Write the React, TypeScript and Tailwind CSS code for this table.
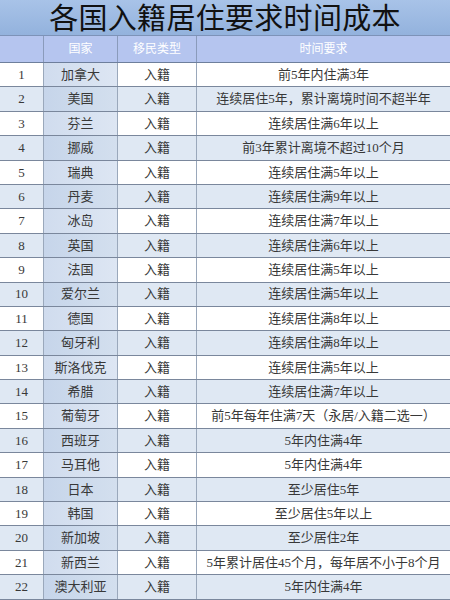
import React from 'react';

const rows: [string, string, string][] = [
  ['加拿大', '入籍', '前5年内住满3年'],
  ['美国', '入籍', '连续居住5年，累计离境时间不超半年'],
  ['芬兰', '入籍', '连续居住满6年以上'],
  ['挪威', '入籍', '前3年累计离境不超过10个月'],
  ['瑞典', '入籍', '连续居住满5年以上'],
  ['丹麦', '入籍', '连续居住满9年以上'],
  ['冰岛', '入籍', '连续居住满7年以上'],
  ['英国', '入籍', '连续居住满6年以上'],
  ['法国', '入籍', '连续居住满5年以上'],
  ['爱尔兰', '入籍', '连续居住满5年以上'],
  ['德国', '入籍', '连续居住满8年以上'],
  ['匈牙利', '入籍', '连续居住满8年以上'],
  ['斯洛伐克', '入籍', '连续居住满5年以上'],
  ['希腊', '入籍', '连续居住满7年以上'],
  ['葡萄牙', '入籍', '前5年每年住满7天（永居/入籍二选一）'],
  ['西班牙', '入籍', '5年内住满4年'],
  ['马耳他', '入籍', '5年内住满4年'],
  ['日本', '入籍', '至少居住5年'],
  ['韩国', '入籍', '至少居住5年以上'],
  ['新加坡', '入籍', '至少居住2年'],
  ['新西兰', '入籍', '5年累计居住45个月，每年居不小于8个月'],
  ['澳大利亚', '入籍', '5年内住满4年'],
];

const font = { fontFamily: '"Liberation Serif", "Noto Sans CJK SC", serif' };

const App: React.FC = () => {
  return (
    <div className="w-[450px] h-[600px] overflow-hidden bg-white text-[#383838]" style={font}>
      <div className="h-[36px] bg-gradient-to-b from-[#a8c3e8] to-[#93b2dd] flex items-center justify-center border-b border-[#7d93b8]">
        <h1 className="text-[29px] leading-none text-[#111] pt-[3px] tracking-[0.3px]">各国入籍居住要求时间成本</h1>
      </div>
      <div className="h-[27px] bg-[#b5c5ef] flex text-white text-[12px] border-b border-[#6e7f9c]">
        <div className="w-[44px] border-r border-[#8a9bbb]" />
        <div className="w-[74px] border-r border-[#8a9bbb] flex items-center justify-center">国家</div>
        <div className="w-[79px] border-r border-[#8a9bbb] flex items-center justify-center">移民类型</div>
        <div className="flex-1 flex items-center justify-center">时间要求</div>
      </div>
      {rows.map(([country, type, req], i) => {
        const even = i % 2 === 1;
        return (
          <div
            key={i}
            className={`h-[24.4px] flex text-[13px] border-b border-[#7a879c] ${even ? 'bg-[#dfe8f3]' : 'bg-white'}`}
          >
            <div className="w-[44px] border-r border-[#9aa8bb] flex items-center justify-center">{i + 1}</div>
            <div
              className={`w-[74px] border-r border-[#9aa8bb] flex items-center justify-center bg-gradient-to-r ${
                even ? 'from-[#c6d5ea] to-[#d3dfee]' : 'from-[#d0dcee] to-[#dde6f3]'
              }`}
            >
              {country}
            </div>
            <div className="w-[79px] border-r border-[#9aa8bb] flex items-center justify-center">{type}</div>
            <div className="flex-1 flex items-center justify-center whitespace-nowrap">{req}</div>
          </div>
        );
      })}
    </div>
  );
};

export default App;
